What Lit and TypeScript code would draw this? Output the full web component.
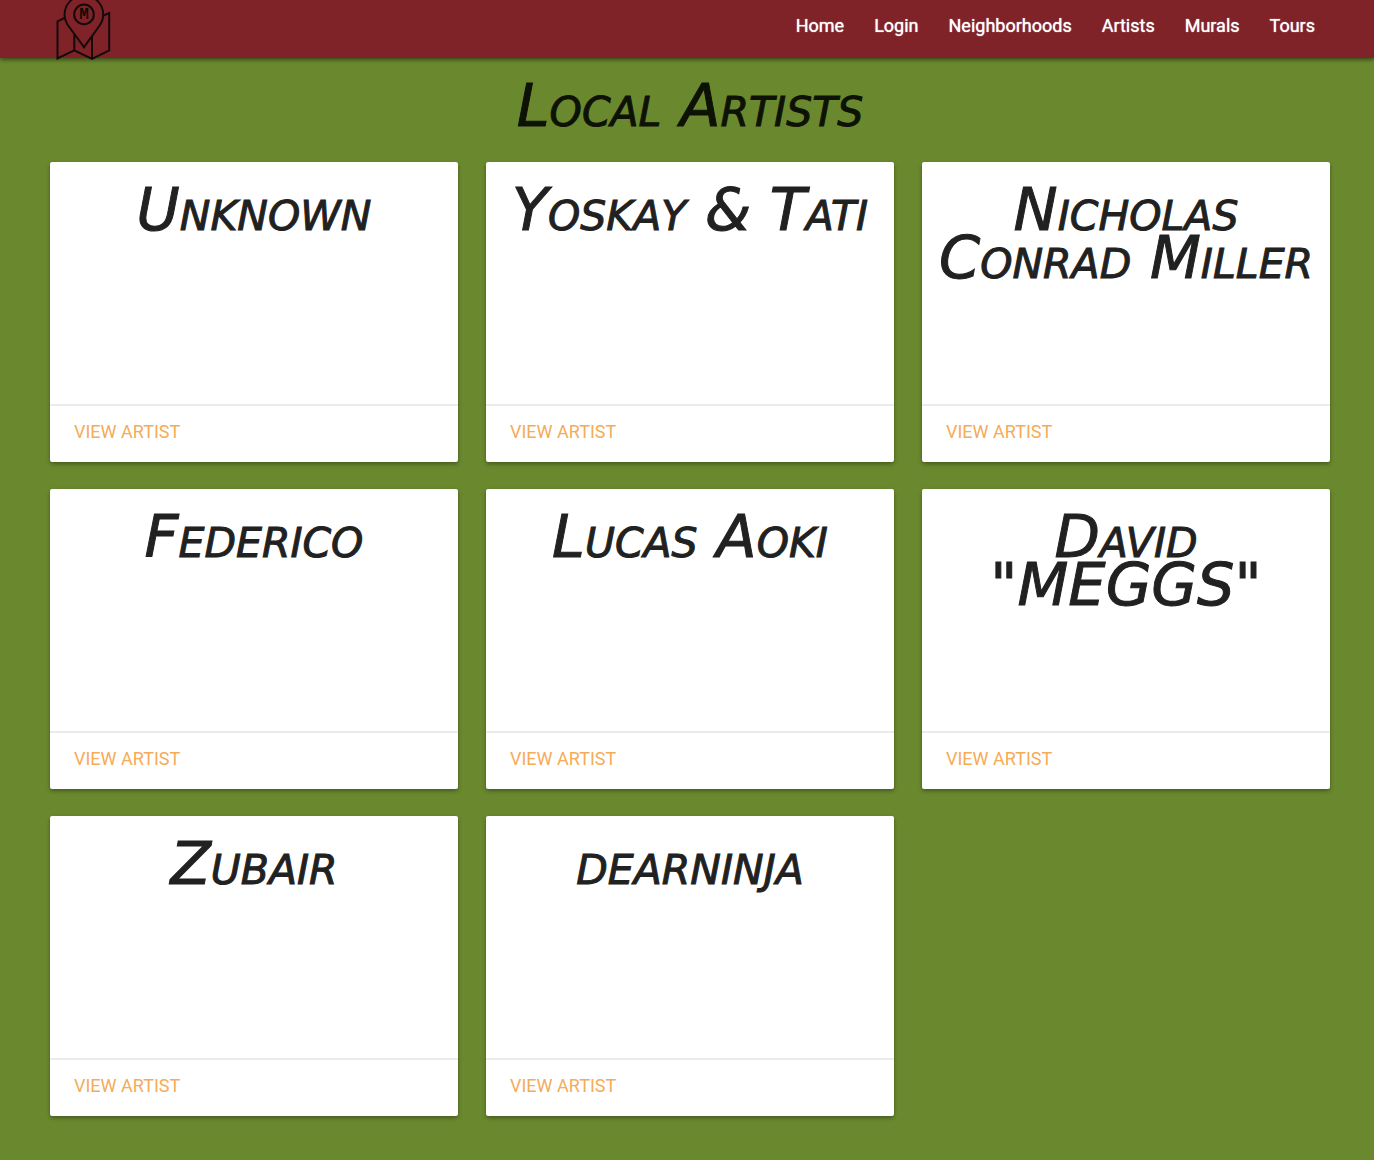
import { LitElement, html, css } from "lit";
import { customElement, property } from "lit/decorators.js";

const links = ["Home", "Login", "Neighborhoods", "Artists", "Murals", "Tours"];

const artists = [
  "Unknown",
  "Yoskay & Tati",
  "Nicholas\nConrad Miller",
  "Federico",
  "Lucas Aoki",
  'David\n"MEGGS"',
  "Zubair",
  "dearninja",
];

const lettering = css`
  .lettering {
    font-family: "Rock Salt", "DejaVu Sans", sans-serif;
    font-size: 59px;
    line-height: 48px;
    font-weight: 400;
    font-style: italic;
    font-variant: small-caps;
    text-align: center;
    white-space: pre-line;
    color: #212121;
    -webkit-text-stroke: 1px currentColor;
  }
`;

@customElement("site-header")
class SiteHeader extends LitElement {
  static styles = css`
    :host {
      display: block;
      position: relative;
      z-index: 1;
      background: #802328;
      box-shadow: 0 2px 4px rgba(0, 0, 0, 0.45);
    }
    .bar {
      display: flex;
      justify-content: space-between;
      align-items: flex-start;
      height: 58px;
      padding: 0 44px 0 56px;
    }
    .logo {
      display: block;
      color: #16090a;
    }
    .logo svg {
      display: block;
    }
    .mark {
      font: 700 16px "Liberation Mono", monospace;
    }
    .links {
      display: flex;
      margin: 0;
      padding: 0;
      list-style: none;
    }
    .link {
      display: block;
      padding: 0 15px;
      font-size: 18px;
      line-height: 52px;
      color: #fff;
      text-decoration: none;
      text-shadow: 0 0 1px #fff;
    }
  `;
  render() {
    return html`
      <nav class="bar">
        <a class="logo" href="#home" aria-label="Murals home">
          <svg width="55" height="60" viewBox="0 0 55 60" fill="none" stroke="currentColor" stroke-width="2">
            <path d="M8.5 18 L1.5 21.3 V58.3 L18.3 50.3 L36 58.8 L53.2 50.3 V13 L46.5 16" />
            <path d="M18.3 50.3 V34.5 M36 58.8 V36" />
            <path d="M28 47.2 L12.5 26 C9.8 22.3 8.6 18.4 8.6 14.6 C8.6 4.3 17 -4.6 28 -4.6 C39 -4.6 47.2 4.3 47.2 14.6 C47.2 18.4 46 22.3 43.3 26 Z" />
            <circle cx="28" cy="14.4" r="9.8" />
            <text class="mark" x="28" y="19" text-anchor="middle" fill="currentColor" stroke="none">M</text>
          </svg>
        </a>
        <ul class="links">
          ${links.map((l) => html`<li><a class="link" href="#${l.toLowerCase()}">${l}</a></li>`)}
        </ul>
      </nav>
    `;
  }
}

@customElement("artist-card")
class ArtistCard extends LitElement {
  @property() name = "";
  static styles = [
    lettering,
    css`
      :host {
        display: flex;
        flex-direction: column;
        min-height: 300px;
        background: #fff;
        border-radius: 2px;
        box-shadow: 0 2px 4px rgba(0, 0, 0, 0.35);
      }
      .name {
        flex: 1;
        margin: 0;
        padding-top: 24px;
      }
      .action {
        padding: 15px 24px 19px;
        border-top: 2px solid #ebebeb;
        font-size: 18px;
        line-height: 22px;
      }
      .view {
        color: #f6ab58;
        text-decoration: none;
        text-transform: uppercase;
      }
    `,
  ];
  render() {
    return html`
      <h2 class="name lettering">${this.name}</h2>
      <div class="action"><a class="view" href="#artist">View Artist</a></div>
    `;
  }
}

@customElement("app-root")
class AppRoot extends LitElement {
  static styles = [
    lettering,
    css`
      :host {
        display: block;
        min-height: 100vh;
        background: #6a892e;
        font-family: Roboto, sans-serif;
      }
      .page {
        padding: 24px 44px 44px 50px;
      }
      .title {
        margin: 0 0 32px;
        color: #0e1206;
      }
      .grid {
        display: grid;
        grid-template-columns: repeat(3, minmax(0, 1fr));
        gap: 27px 28px;
      }
    `,
  ];
  render() {
    return html`
      <site-header></site-header>
      <main class="page">
        <h1 class="title lettering">Local Artists</h1>
        <div class="grid">
          ${artists.map((a) => html`<artist-card .name=${a}></artist-card>`)}
        </div>
      </main>
    `;
  }
}
